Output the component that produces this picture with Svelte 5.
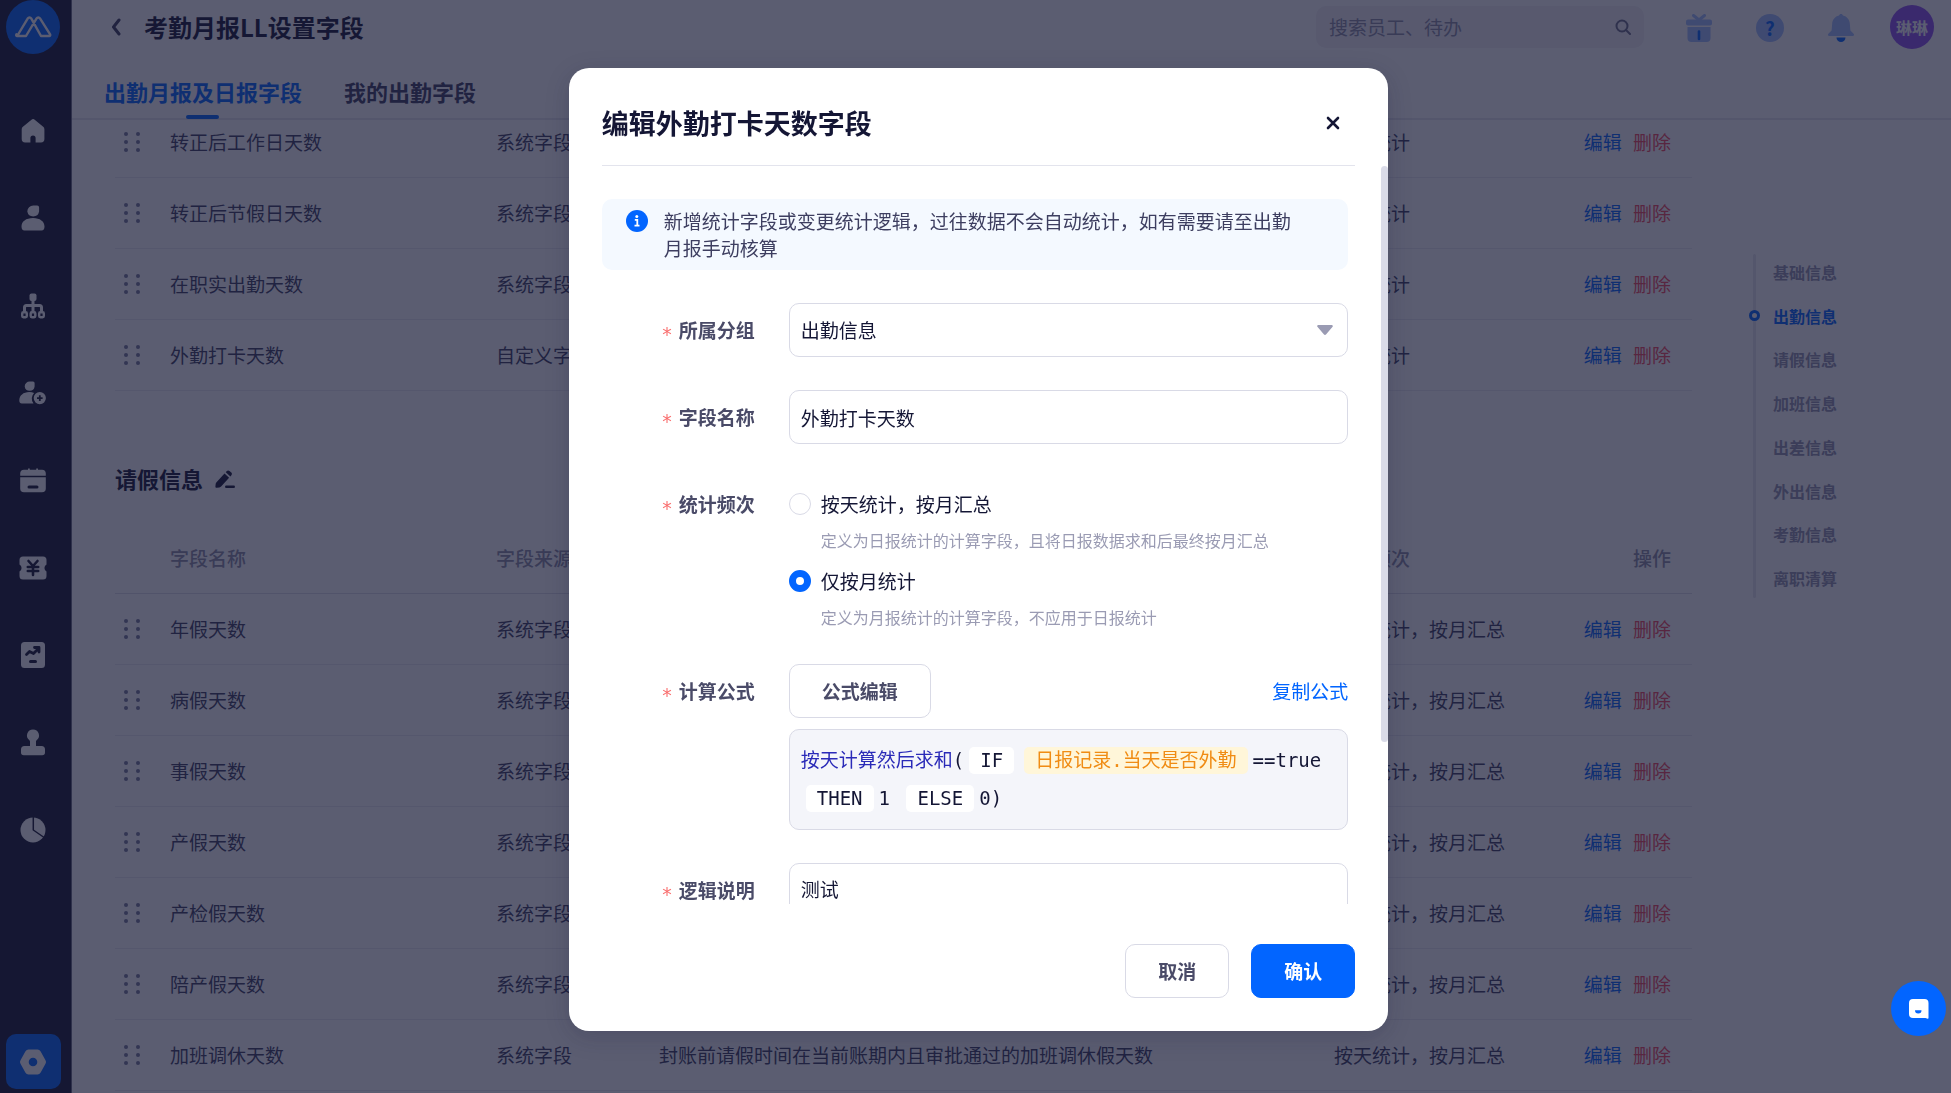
<script lang="ts">
  /**
   * App.svelte — attendance report field settings page with the field edit dialog on top.
   */

  interface Field {
    name: string;
    source: string;
    desc: string;
    freq: string;
  }

  const attendanceFields: Field[] = [
    { name: '转正后工作日天数', source: '系统字段', desc: '', freq: '按天统计' },
    { name: '转正后节假日天数', source: '系统字段', desc: '', freq: '按天统计' },
    { name: '在职实出勤天数', source: '系统字段', desc: '', freq: '按天统计' },
    { name: '外勤打卡天数', source: '自定义字段', desc: '', freq: '按天统计' },
  ];

  const leaveFields: Field[] = [
    ...['年假天数', '病假天数', '事假天数', '产假天数', '产检假天数', '陪产假天数'].map((name) => ({
      name,
      source: '系统字段',
      desc: '',
      freq: '按天统计，按月汇总',
    })),
    {
      name: '加班调休天数',
      source: '系统字段',
      desc: '封账前请假时间在当前账期内且审批通过的加班调休假天数',
      freq: '按天统计，按月汇总',
    },
  ];

  const anchors = ['基础信息', '出勤信息', '请假信息', '加班信息', '出差信息', '外出信息', '考勤信息', '离职清算'];
  const navItems = ['home', 'user', 'org', 'invite', 'calendar', 'ticket', 'report', 'stamp', 'pie'];

  let activeAnchor = $state('出勤信息');
  let open = $state(true);
  let group = $state('出勤信息');
  let fieldName = $state('外勤打卡天数');
  let freq = $state('month');
  let logic = $state('测试');
</script>

{#snippet navIcon(name: string)}
  <svg class="nav-icon" viewBox="0 0 28 28" fill="currentColor" aria-hidden="true">
    {#if name === 'home'}
      <path d="M12.2 2.9a3 3 0 0 1 3.8 0l8.2 6.9a3.2 3.2 0 0 1 1.2 2.5V22a3.4 3.4 0 0 1-3.4 3.4h-5.4V21a2.6 2.6 0 0 0-5.2 0v4.4H6.1A3.4 3.4 0 0 1 2.7 22v-9.7a3.2 3.2 0 0 1 1.2-2.5z" />
    {:else if name === 'user'}
      <path d="M8.3 7.500a6 6 0 0 1 6-6h3.800a2 2 0 0 1 2 2v4a6 6 0 0 1-11.800 0zM2.500 22.500C2.500 17.500 7 14 14 14s11.500 3.500 11.500 8.500c0 2.500-1 4-3 4h-17c-2 0-3-1.500-3-4z" />
    {:else if name === 'org'}
      <g fill="none" stroke="currentColor" stroke-width="2.4">
        <path d="M14 8v12M5.500 20v-4.600a2 2 0 0 1 2-2h13a2 2 0 0 1 2 2V20" stroke-width="3" />
        <rect x="3.200" y="20.200" width="4.600" height="5" rx="1.200" />
        <rect x="11.700" y="20.200" width="4.600" height="5" rx="1.200" />
        <rect x="20.200" y="20.200" width="4.600" height="5" rx="1.200" />
      </g>
      <rect x="10.500" y="1.500" width="7" height="7.500" rx="2" />
    {:else if name === 'invite'}
      <path d="M5.700 7.500a5 5 0 0 1 5-5H14a1.600 1.600 0 0 1 1.600 1.600v3.400a5 5 0 0 1-9.900 0zM.3 21.500c0-5 4-8.500 10-8.500 1.800 0 3.400.3 4.800.9a8 8 0 0 0-.6 10.600H2.800c-1.600 0-2.500-1-2.500-3z" />
      <path fill-rule="evenodd" d="M20.800 13a6.100 6.100 0 1 1 0 12.200 6.100 6.100 0 0 1 0-12.200zm-.9 3.300v1.900H18V20h1.900v1.900h1.800V20h1.900v-1.800h-1.900v-1.900z" />
    {:else if name === 'calendar'}
      <path d="M5 3.800h4V2.500h1.800v1.300h6.400V2.500H19v1.300h4a3.800 3.800 0 0 1 3.800 3.800v2.200H1.200V7.600A3.800 3.800 0 0 1 5 3.800z" />
      <path fill-rule="evenodd" d="M1.200 11.300h25.600v11.200a3.800 3.800 0 0 1-3.800 3.800H5a3.800 3.800 0 0 1-3.800-3.800zM10 19.500a1.500 1.500 0 0 0 0 3h8a1.500 1.500 0 0 0 0-3z" />
    {:else if name === 'ticket'}
      <path d="M4 2.500h20a3.500 3.500 0 0 1 3.500 3.500v4.500a4 4 0 0 0 0 7V22a3.500 3.500 0 0 1-3.500 3.500H4A3.500 3.500 0 0 1 .5 22v-4.500a4 4 0 0 0 0-7V6A3.500 3.500 0 0 1 4 2.500z" />
      <path class="cut" d="M9.500 7l4.500 5 4.500-5M8.800 13h10.400M8.800 17h10.400M14 12v9" stroke-width="2.600" />
    {:else if name === 'report'}
      <rect x="2" y="1" width="24" height="26" rx="3.500" />
      <path class="cut" d="M7.500 13.500l3-3 4 2 5-5M15.500 6.500h4.500v4.500" stroke-width="2.800" />
      <path class="cut" d="M11.500 20.500h5" stroke-width="3" />
    {:else if name === 'stamp'}
      <path d="M14 .5a6 6 0 0 1 3.600 10.800c-.6.500-.6 1-.6 1.700v4h5.500a3.500 3.500 0 0 1 3.500 3.500v3a2.800 2.800 0 0 1-2.800 2.800H4.800A2.800 2.800 0 0 1 2 23.500v-3A3.500 3.500 0 0 1 5.500 17H11v-4c0-.7 0-1.200-.6-1.700A6 6 0 0 1 14 .5z" />
    {:else}
      <circle cx="14" cy="14" r="12.500" />
      <path class="cut" d="M14.300 1v13l10.800 7.500" stroke-width="1.500" />
    {/if}
  </svg>
{/snippet}

{#snippet rows(fields: Field[])}
  {#each fields as f}
    <tr>
      <td class="handle">
        <svg width="16" height="20" viewBox="0 0 16 20" aria-hidden="true">
          {#each [2, 14] as cx}
            {#each [2, 10, 18] as cy}
              <circle {cx} {cy} r="2" />
            {/each}
          {/each}
        </svg>
      </td>
      <td>{f.name}</td>
      <td>{f.source}</td>
      <td>{f.desc}</td>
      <td>{f.freq}</td>
      <td class="ops">
        <button class="link" onclick={() => (open = true)}>编辑</button>
        <button class="link danger">删除</button>
      </td>
    </tr>
  {/each}
{/snippet}

{#snippet cols()}
  <colgroup>
    <col class="c-handle" />
    <col class="c-name" />
    <col class="c-source" />
    <col />
    <col class="c-freq" />
    <col class="c-ops" />
  </colgroup>
{/snippet}

<div class="app">
  <aside class="sidebar">
    <div class="brand">
      <svg width="54" height="54" viewBox="0 0 54 54" aria-hidden="true">
        <circle cx="27" cy="27" r="27" fill="#0265ff" />
        <path
          d="M11.200 36L21.800 18.400a2 2 0 0 1 3.400 0L35 36h8.200c.9 0 1.400-.9.900-1.700L34 18.400a2 2 0 0 0-3.400 0L20 36h-8.800c-.9 0-1.300-.9-.8-1.700z"
          fill="none"
          stroke="#fff"
          stroke-width="2.400"
          stroke-linejoin="round"
        />
      </svg>
    </div>
    <nav class="side-nav">
      {#each navItems as item}
        <button class="nav-btn" aria-label={item}>{@render navIcon(item)}</button>
      {/each}
    </nav>
    <div class="side-foot">
      <button class="settings" aria-label="设置">
        <svg width="28" height="28" viewBox="0 0 28 28" aria-hidden="true">
          <path
            fill="#fff"
            fill-rule="evenodd"
            d="M9.500 1.500h9a3.500 3.500 0 0 1 3 1.700l5 9a3.600 3.600 0 0 1 0 3.600l-5 9a3.500 3.500 0 0 1-3 1.700h-9a3.500 3.500 0 0 1-3-1.700l-5-9a3.600 3.600 0 0 1 0-3.600l5-9a3.500 3.500 0 0 1 3-1.700zM14 9.700a4.300 4.300 0 1 0 0 8.600 4.300 4.300 0 0 0 0-8.600z"
          />
        </svg>
      </button>
    </div>
  </aside>

  <div class="page">
    <header class="topbar">
      <button class="back" aria-label="返回">
        <svg width="10" height="18" viewBox="0 0 10 18" fill="none" aria-hidden="true">
          <path d="M8 2L2.500 9 8 16" stroke="#3c3c5a" stroke-width="3" stroke-linecap="round" stroke-linejoin="round" />
        </svg>
      </button>
      <h1>考勤月报LL设置字段</h1>
      <label class="search">
        <input type="text" placeholder="搜索员工、待办" aria-label="搜索" />
        <svg width="16" height="16" viewBox="0 0 16 16" fill="none" stroke="#6b6c88" stroke-width="2" aria-hidden="true">
          <circle cx="7" cy="7" r="5.500" />
          <path d="M11 11l4 4" stroke-linecap="round" />
        </svg>
      </label>
      <div class="tools">
        <button class="tool" aria-label="礼物">
          <svg width="28" height="28" viewBox="0 0 28 28" aria-hidden="true">
            <path d="M8.500 1.500l5.500 4.500 5.500-4.500" fill="none" stroke="#a0beff" stroke-width="3" stroke-linecap="round" />
            <rect x="1" y="5.500" width="26" height="6" rx="2" fill="#a0beff" />
            <path d="M2.500 13h23v11a4 4 0 0 1-4 4h-15a4 4 0 0 1-4-4z" fill="#a0beff" />
            <path d="M14 17.500v7.500" stroke="#0265ff" stroke-width="2.600" stroke-linecap="round" />
          </svg>
        </button>
        <button class="tool" aria-label="帮助"><span class="help">?</span></button>
        <button class="tool" aria-label="通知">
          <svg width="28" height="28" viewBox="0 0 28 28" aria-hidden="true">
            <path d="M14 0c1 0 1.700.6 2 1.500 4 1 6.500 4 6.800 8l.6 7 3.200 3.300c.9 1 .4 2.200-.9 2.200H2.300c-1.300 0-1.800-1.200-.9-2.200l3.200-3.300.6-7c.3-4 2.800-7 6.800-8C12.300.6 13 0 14 0z" fill="#a0beff" />
            <path d="M9.500 23.500h9a4.500 4.500 0 0 1-9 0z" fill="#0265ff" />
          </svg>
        </button>
      </div>
      <span class="avatar">琳琳</span>
    </header>

    <nav class="tabs">
      <a class="tab active" href="#fields">出勤月报及日报字段</a>
      <a class="tab" href="#mine">我的出勤字段</a>
    </nav>

    <main class="content">
      <div class="tables">
        <table class="scrolled">
          {@render cols()}
          <tbody>{@render rows(attendanceFields)}</tbody>
        </table>

        <div class="section">
          <h2>请假信息</h2>
          <button class="icon-btn" aria-label="编辑分组">
            <svg width="20" height="20" viewBox="0 0 20 20" fill="#141635" aria-hidden="true">
              <path d="M9.500 3.500l4.600 4.300-8 8.700c-.5.500-1 .8-1.700.9l-2.700.4c-.8.100-1.400-.5-1.300-1.300l.3-2.700c.1-.6.400-1.200.8-1.600z" />
              <path d="M10.800 2.200l1-1.100c.7-.8 1.900-.8 2.700-.1l1.800 1.600c.8.700.8 1.900.1 2.700l-1 1.100z" />
              <rect x="10" y="15.500" width="10" height="2.600" rx="1.300" />
            </svg>
          </button>
        </div>

        <table>
          {@render cols()}
          <thead>
            <tr>
              <th></th>
              <th>字段名称</th>
              <th>字段来源</th>
              <th>字段说明</th>
              <th>统计频次</th>
              <th class="ops">操作</th>
            </tr>
          </thead>
          <tbody>{@render rows(leaveFields)}</tbody>
        </table>
      </div>

      <aside class="anchors">
        <ul>
          {#each anchors as a}
            <li class:active={a === activeAnchor}>
              <button onclick={() => (activeAnchor = a)}>{a}</button>
            </li>
          {/each}
        </ul>
      </aside>
    </main>
  </div>
</div>

{#if open}
  <div class="backdrop">
    <div class="dialog" role="dialog" aria-modal="true" aria-labelledby="dialog-title">
      <header class="dialog-head">
        <h2 id="dialog-title">编辑外勤打卡天数字段</h2>
        <button class="close" aria-label="关闭" onclick={() => (open = false)}>
          <svg width="14" height="14" viewBox="0 0 14 14" aria-hidden="true">
            <path d="M2 2l10 10M12 2L2 12" stroke="#141635" stroke-width="2.600" stroke-linecap="round" />
          </svg>
        </button>
      </header>

      <div class="dialog-body">
        <div class="form">
          <div class="notice">
            <svg width="22" height="22" viewBox="0 0 22 22" aria-hidden="true">
              <circle cx="11" cy="11" r="11" fill="#0265ff" />
              <circle cx="10.800" cy="6.400" r="1.500" fill="#fff" />
              <path d="M8.800 9.800h2.500v5.400M8.500 15.600h5" fill="none" stroke="#fff" stroke-width="1.800" />
            </svg>
            <p>新增统计字段或变更统计逻辑，过往数据不会自动统计，如有需要请至出勤月报手动核算</p>
          </div>

          <div class="row">
            <label class="label" for="group">所属分组</label>
            <div class="select">
              <select id="group" class="box" bind:value={group}>
                {#each anchors as a}
                  <option>{a}</option>
                {/each}
              </select>
              <svg width="16" height="10" viewBox="0 0 16 10" fill="#9a9bb3" aria-hidden="true">
                <path d="M1.500 0h13c1.200 0 1.700 1.200.9 2L9.200 9.300c-.7.800-1.700.8-2.400 0L.6 2C-.2 1.200.3 0 1.500 0z" />
              </svg>
            </div>
          </div>

          <div class="row">
            <label class="label" for="field-name">字段名称</label>
            <input id="field-name" class="box" type="text" bind:value={fieldName} />
          </div>

          <div class="row">
            <span class="label">统计频次</span>
            <div class="radios">
              <label class="radio">
                <input type="radio" name="freq" value="day" bind:group={freq} />
                <span>按天统计，按月汇总</span>
              </label>
              <p class="hint">定义为日报统计的计算字段，且将日报数据求和后最终按月汇总</p>
              <label class="radio">
                <input type="radio" name="freq" value="month" bind:group={freq} />
                <span>仅按月统计</span>
              </label>
              <p class="hint">定义为月报统计的计算字段，不应用于日报统计</p>
            </div>
          </div>

          <div class="row">
            <span class="label">计算公式</span>
            <div class="formula-field">
              <div class="formula-bar">
                <button class="btn">公式编辑</button>
                <button class="link copy">复制公式</button>
              </div>
              <div class="formula">
                <span class="fn">按天计算然后求和</span>(<span class="chip">IF</span><span class="chip ref">日报记录.当天是否外勤</span>==true<wbr /><span class="chip">THEN</span>1 <span class="chip">ELSE</span>0)
              </div>
            </div>
          </div>

          <div class="row">
            <label class="label" for="logic">逻辑说明</label>
            <textarea id="logic" class="box" rows="4" bind:value={logic}></textarea>
          </div>
        </div>
        <div class="track"><div class="thumb"></div></div>
      </div>

      <footer class="dialog-foot">
        <button class="btn" onclick={() => (open = false)}>取消</button>
        <button class="btn primary">确认</button>
      </footer>
    </div>
  </div>
{/if}

<button class="chat" aria-label="在线客服">
  <svg width="20" height="20" viewBox="0 0 20 20" aria-hidden="true">
    <path d="M4 0h11.500a4 4 0 0 1 4 4v15c0 .6-.3.900-.8.800l-2.200-.8H4a4 4 0 0 1-4-4V4a4 4 0 0 1 4-4z" fill="#fff" />
    <path d="M6 11.300h6.500a3.200 3.200 0 0 1-6.500 0z" fill="#0265ff" />
  </svg>
</button>

<style>
  :global(body) {
    font-family: 'Noto Sans CJK SC', sans-serif;
    font-size: 19px;
    line-height: 28px;
    color: #141635;
  }

  h1, h2, p, ul {
    margin: 0;
    padding: 0;
    list-style: none;
  }

  button {
    padding: 0;
    border: none;
    background: none;
    font: inherit;
    color: inherit;
    cursor: pointer;
  }

  input, select, textarea {
    font: inherit;
    color: inherit;
  }

  svg {
    display: block;
    flex-shrink: 0;
  }

  .app {
    display: flex;
    height: 100vh;
    overflow: hidden;
    background: #fff;
  }

  .sidebar {
    display: flex;
    flex-direction: column;
    flex-shrink: 0;
    width: 66px;
    padding-right: 5px;
    border-right: 1px solid #6b6c80;
    background: #15162f;
    color: #fff;
  }

  .brand {
    display: flex;
    justify-content: center;
    height: 87px;
  }

  .side-nav {
    flex: 1;
    display: flex;
    flex-direction: column;
  }

  .nav-btn {
    flex: 1;
    display: flex;
    align-items: center;
    justify-content: center;
  }

  .nav-icon {
    width: 28px;
    height: 28px;
  }

  .cut {
    fill: none;
    stroke: #15162f;
    stroke-linecap: round;
    stroke-linejoin: round;
  }

  .side-foot {
    display: flex;
    align-items: flex-end;
    justify-content: center;
    height: 215px;
    padding-bottom: 4px;
  }

  .settings {
    display: flex;
    align-items: center;
    justify-content: center;
    width: 55px;
    height: 55px;
    border-radius: 10px;
    background: #0265ff;
  }

  .page {
    flex: 1;
    min-width: 0;
    display: flex;
    flex-direction: column;
  }

  .topbar {
    display: flex;
    align-items: center;
    flex-shrink: 0;
    height: 54px;
    padding: 0 17px 0 39px;
  }

  h1 {
    flex: 1;
    margin-left: 23px;
    font-size: 24px;
    font-weight: 700;
  }

  .search {
    display: flex;
    align-items: center;
    width: 302px;
    height: 42px;
    padding: 0 13px;
    border-radius: 10px;
    background: #f3f1f6;
  }

  .search input {
    flex: 1;
    min-width: 0;
    padding: 0;
    border: none;
    outline: none;
    background: none;
  }

  .search input::placeholder {
    color: #8c8da6;
  }

  .tools {
    display: flex;
    gap: 43px;
    margin: 2px 35px 0 41px;
  }

  .help {
    display: flex;
    align-items: center;
    justify-content: center;
    width: 28px;
    height: 28px;
    border-radius: 50%;
    background: #a0beff;
    color: #0265ff;
    font-size: 19px;
    font-weight: 700;
  }

  .avatar {
    width: 44px;
    height: 44px;
    border-radius: 50%;
    background: #8f50f0;
    color: #fff;
    font-size: 16px;
    font-weight: 700;
    line-height: 44px;
    text-align: center;
  }

  .tabs {
    display: flex;
    flex-shrink: 0;
    gap: 42px;
    height: 64px;
    padding-left: 32px;
    border-bottom: 2px solid #e6e6ee;
  }

  .tab {
    position: relative;
    color: #3d3e60;
    font-size: 22px;
    font-weight: 700;
    line-height: 74px;
    text-decoration: none;
  }

  .tab.active {
    color: #0265ff;
  }

  .tab.active::after {
    content: '';
    position: absolute;
    left: 50%;
    bottom: -1px;
    width: 33px;
    height: 4px;
    margin-left: -17px;
    border-radius: 2px;
    background: #0265ff;
  }

  .content {
    flex: 1;
    display: flex;
    min-height: 0;
    overflow: hidden;
  }

  .tables {
    flex: 1;
    margin-left: 43px;
  }

  .scrolled {
    margin-top: -13px;
  }

  table {
    width: 100%;
    table-layout: fixed;
    border-collapse: separate;
    border-spacing: 0;
  }

  .c-handle { width: 34px; }
  .c-name { width: 326px; }
  .c-source { width: 163px; }
  .c-freq { width: 217px; }
  .c-ops { width: 162px; }

  th, td {
    box-sizing: border-box;
    height: 71px;
    padding: 0 21px;
    border-bottom: 1px solid #ebebf2;
    text-align: left;
    white-space: nowrap;
    font-weight: 400;
    color: #3d3e60;
  }

  th {
    border-color: #dcdce6;
    color: #8c8da6;
    font-weight: 500;
  }

  .handle {
    padding: 0 9px;
    fill: #77789a;
  }

  .ops {
    text-align: right;
  }

  .link {
    color: #0265ff;
  }

  .ops .link + .link {
    margin-left: 7px;
  }

  .danger {
    color: #f5485a;
  }

  .section {
    display: flex;
    align-items: center;
    gap: 12px;
    height: 32px;
    padding: 73px 0 27px;
  }

  h2 {
    font-size: 22px;
    font-weight: 700;
  }

  .section h2 {
    padding-bottom: 4px;
  }

  .anchors {
    width: 198px;
    padding: 130px 0 0 61px;
  }

  .anchors ul {
    position: relative;
    display: flex;
    flex-direction: column;
    height: 350px;
  }

  .anchors ul::before {
    content: '';
    position: absolute;
    top: 4px;
    bottom: 2px;
    width: 3px;
    border-radius: 2px;
    background: #e6e6ee;
  }

  .anchors li {
    position: relative;
    flex: 1;
    display: flex;
    align-items: center;
    padding-left: 20px;
    color: #9495ae;
    font-size: 16px;
    font-weight: 700;
  }

  .anchors li.active {
    color: #0265ff;
  }

  .anchors li.active::before {
    content: '';
    position: absolute;
    left: -4px;
    width: 5px;
    height: 5px;
    border: 3px solid #0265ff;
    border-radius: 50%;
    background: #fff;
  }

  .backdrop {
    position: fixed;
    inset: 0;
    display: flex;
    align-items: center;
    justify-content: center;
    padding: 6px 0 0 6px;
    background: rgba(22, 24, 52, 0.7);
  }

  .dialog {
    display: flex;
    flex-direction: column;
    width: 42vw;
    min-width: 760px;
    height: calc(100vh - 130px);
    border-radius: 20px;
    background: #fff;
    box-shadow: 0 6px 24px rgba(20, 22, 53, 0.2);
  }

  .dialog-head {
    display: flex;
    align-items: center;
    justify-content: space-between;
    flex-shrink: 0;
    height: 97px;
    margin: 0 33px;
    border-bottom: 1px solid #e3e4ed;
  }

  .dialog-head h2 {
    padding-top: 12px;
    font-size: 27px;
  }

  .close {
    padding: 12px 15px 0;
  }

  .dialog-body {
    flex: 1;
    display: flex;
    min-height: 0;
    overflow: hidden;
  }

  .form {
    flex: 1;
    display: flex;
    flex-direction: column;
    gap: 33px;
    height: max-content;
    padding: 33px;
  }

  .track {
    width: 7px;
  }

  .thumb {
    height: 78%;
    border-radius: 4px;
    background: #dadbe8;
  }

  .notice {
    display: flex;
    gap: 16px;
    padding: 8px 48px 9px 24px;
    border-radius: 10px;
    background: #f4f9ff;
    color: #3d3e60;
  }

  .notice svg {
    margin-top: 3px;
  }

  .notice p {
    line-height: 27px;
  }

  .row {
    display: flex;
    gap: 34px;
  }

  .label {
    flex-shrink: 0;
    width: 153px;
    line-height: 54px;
    text-align: right;
    font-weight: 700;
    color: #4a4b68;
  }

  .label::before {
    content: '*';
    margin-right: 7px;
    color: #f97070;
    font-family: 'DejaVu Sans', sans-serif;
    font-weight: 400;
    line-height: 1;
    vertical-align: -3px;
  }

  .box {
    box-sizing: border-box;
    flex: 1;
    width: 100%;
    min-width: 0;
    height: 54px;
    margin: 0;
    padding: 0 11px;
    border: 1px solid #d9dae6;
    border-radius: 10px;
    outline: none;
    background: #fff;
    appearance: none;
  }

  textarea.box {
    height: 120px;
    padding: 11px;
    resize: none;
  }

  .select {
    position: relative;
    flex: 1;
  }

  .select svg {
    position: absolute;
    right: 15px;
    top: 22px;
    pointer-events: none;
  }

  .radios {
    flex: 1;
    padding-top: 13px;
  }

  .radio {
    display: flex;
    align-items: center;
    gap: 10px;
  }

  .radio input {
    width: 22px;
    height: 22px;
    margin: 0;
    border: 1px solid #d9dae6;
    border-radius: 50%;
    appearance: none;
  }

  .radio input:checked {
    border: 7px solid #0265ff;
  }

  .hint {
    padding: 8px 0 13px 32px;
    color: #9a9bb3;
    font-size: 16px;
  }

  .hint:last-child {
    padding-bottom: 0;
  }

  .formula-field {
    flex: 1;
  }

  .formula-bar {
    display: flex;
    align-items: center;
    justify-content: space-between;
    margin-bottom: 11px;
  }

  .btn {
    box-sizing: border-box;
    height: 54px;
    padding: 0 32px;
    border: 1px solid #d9dae6;
    border-radius: 10px;
    background: #fff;
    color: #4a4b68;
    font-weight: 700;
  }

  .primary {
    border-color: #0265ff;
    background: #0265ff;
    color: #fff;
  }

  .formula {
    padding: 11px 11px 12px;
    border: 1px solid #d9dae6;
    border-radius: 10px;
    background: #f4f5fa;
    font-family: 'DejaVu Sans Mono', 'Noto Sans CJK SC', monospace;
    line-height: 38px;
  }

  .fn {
    color: #2a2ab8;
  }

  .chip {
    display: inline-block;
    margin: 0 5px;
    padding: 0 11px;
    border-radius: 5px;
    background: #fff;
    line-height: 27px;
  }

  .ref {
    background: #fff6d9;
    color: #f08c14;
  }

  .dialog-foot {
    display: flex;
    flex-shrink: 0;
    justify-content: flex-end;
    gap: 22px;
    padding: 40px 33px 33px;
  }

  .chat {
    position: fixed;
    right: 5px;
    bottom: 57px;
    display: flex;
    align-items: center;
    justify-content: center;
    width: 55px;
    height: 55px;
    border-radius: 50%;
    background: #0265ff;
  }
</style>
